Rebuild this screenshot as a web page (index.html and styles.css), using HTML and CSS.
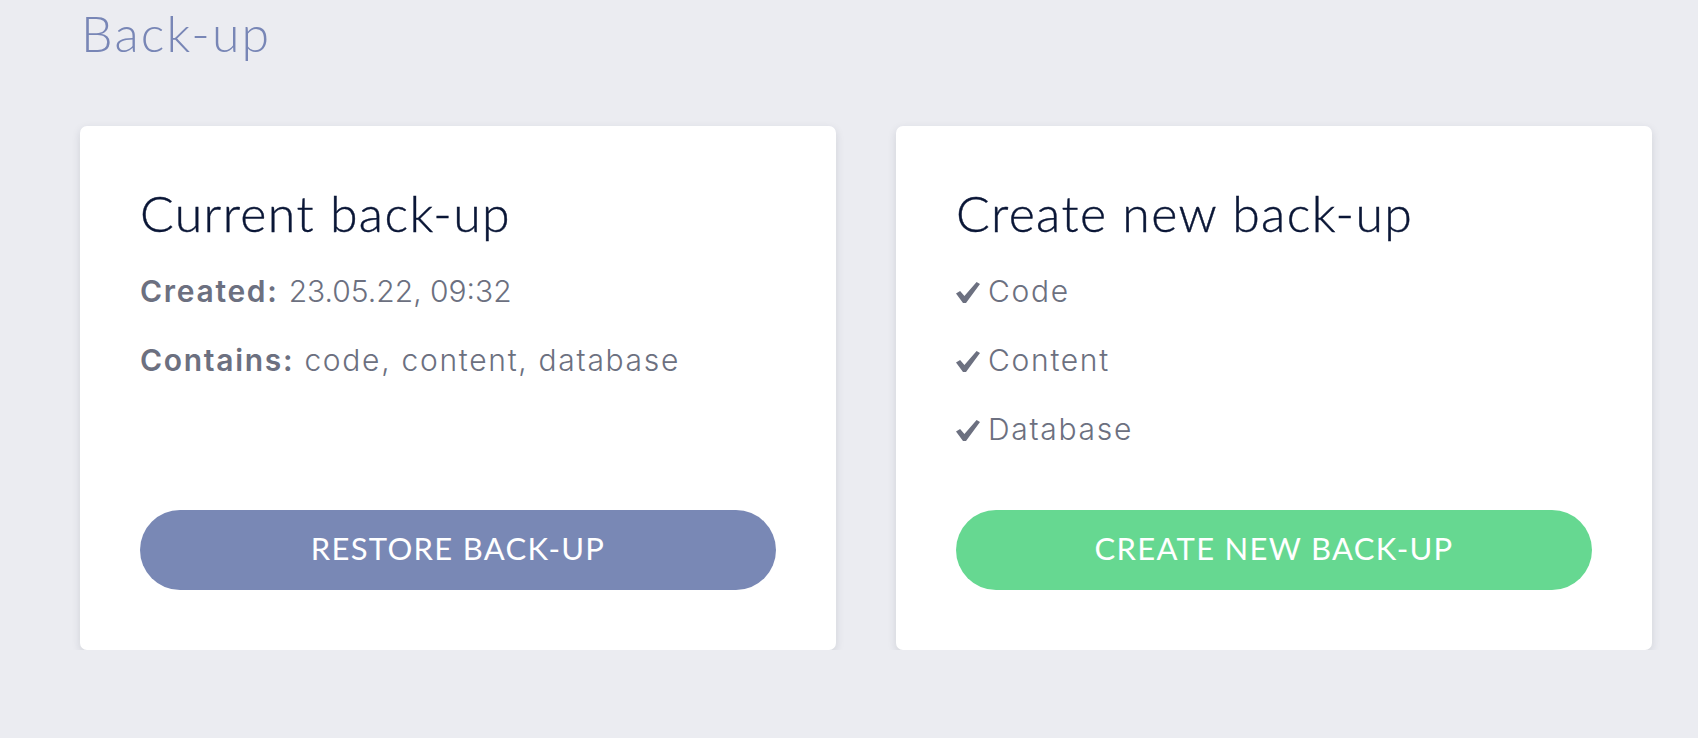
FILE: index.html
```html
<!DOCTYPE html>
<html lang="en">
<head>
    <meta charset="UTF-8">
    <title>Back-up</title>

    <link rel="stylesheet" href="styles.css">

</head>
<body>
<div class="page">
    <h1 class="page-title">Back-up</h1>
    <div class="cards">
        <div class="card">
            <h2 class="card-title">Current back-up</h2>
            <div class="lines">
                <p><b>Created:</b> <span class="num">23.05.22, 09:32</span></p>
                <p><b>Contains:</b> code, content, database</p>
            </div>
            <button class="btn btn-restore">RESTORE BACK-UP</button>
        </div>
        <div class="card">
            <h2 class="card-title">Create new back-up</h2>
            <div class="lines">
                <p>
                    <svg class="check" viewBox="0 0 24 21"><path d="M0 11.6 L4.1 9.1 L8.4 13.9 L20.6 0 L24 2.1 L10 21 L7 21 Z"/></svg>Code
                </p>
                <p>
                    <svg class="check" viewBox="0 0 24 21"><path d="M0 11.6 L4.1 9.1 L8.4 13.9 L20.6 0 L24 2.1 L10 21 L7 21 Z"/></svg>Content
                </p>
                <p>
                    <svg class="check" viewBox="0 0 24 21"><path d="M0 11.6 L4.1 9.1 L8.4 13.9 L20.6 0 L24 2.1 L10 21 L7 21 Z"/></svg>Database
                </p>
            </div>
            <button class="btn btn-create">CREATE NEW BACK-UP</button>
        </div>
    </div>
</div>
</body>
</html>
```

FILE: styles.css
```css
* {
    box-sizing: border-box;
}

body {
    margin: 0;
    background-color: #ebecf1;
    font-family: Lato, "Open Sans", sans-serif;
}

.page {
    padding: 3px 0 0 80px;
}

.page-title {
    margin: 0;
    padding-left: 1px;
    font-size: 50px;
    line-height: 60px;
    font-weight: 300;
    letter-spacing: 2.2px;
    color: #7886b6;
}

.cards {
    display: flex;
    gap: 60px;
    margin-top: 63px;
}

.card {
    width: 756px;
    min-height: 524px;
    padding: 57px 60px 60px 60px;
    background-color: #fff;
    border-radius: 7px;
    box-shadow: 0 3px 8px rgba(30, 35, 60, 0.13);
    display: flex;
    flex-direction: column;
}

.card-title {
    margin: 0 0 26px 0;
    font-size: 50px;
    line-height: 60px;
    font-weight: 300;
    letter-spacing: 1.4px;
    color: #0a1636;
    -webkit-text-stroke: 0.4px #0a1636;
}

.lines p {
    margin: 0 0 24px 0;
    font-family: Inter, sans-serif;
    font-size: 30px;
    line-height: 45px;
    font-weight: 300;
    letter-spacing: 1.7px;
    color: #6c7080;
}

.lines p:last-child {
    margin-bottom: 0;
}

.lines b {
    font-weight: 600;
}

.lines .num {
    letter-spacing: 0;
}

.check {
    width: 24px;
    height: 21px;
    margin: 0 8px 0 0;
    fill: #6c7080;
    vertical-align: -1px;
}

.btn {
    margin-top: auto;
    height: 80px;
    width: 100%;
    padding: 0 0 5px 0;
    border: none;
    border-radius: 40px;
    color: #fff;
    font-family: Lato, "Open Sans", sans-serif;
    font-size: 31px;
    font-weight: 400;
    letter-spacing: 1.3px;
    cursor: pointer;
}

.btn-restore {
    background-color: #7988b5;
}

.btn-create {
    background-color: #66d891;
}
```
